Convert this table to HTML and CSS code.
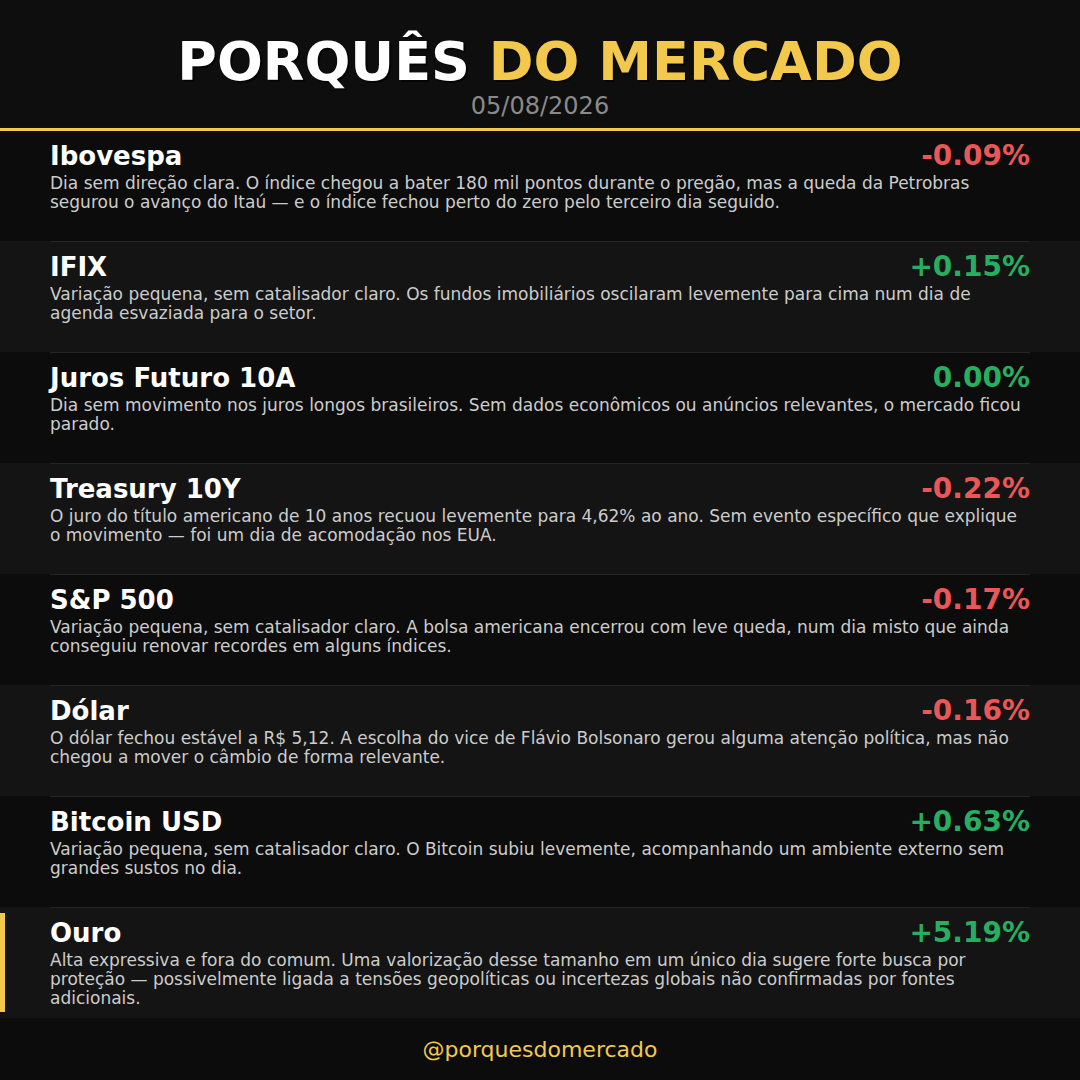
FILE: index.html
```html
<!DOCTYPE html>
<html lang="pt-BR">
<head>
<meta charset="utf-8">
<title>Porquês do Mercado</title>
<link rel="stylesheet" href="styles.css">
</head>
<body>
<div class="page">
  <header class="header">
    <h1 class="title">PORQUÊS <span class="accent">DO MERCADO</span></h1>
    <div class="date">05/08/2026</div>
  </header>
  <main class="list">
    <section class="row">
      <div class="inner first">
        <div class="head"><h2 class="name">Ibovespa</h2><span class="pct neg">-0.09%</span></div>
        <p class="desc">Dia sem direção clara. O índice chegou a bater 180 mil pontos durante o pregão, mas a queda da Petrobras segurou o avanço do Itaú — e o índice fechou perto do zero pelo terceiro dia seguido.</p>
      </div>
    </section>
    <section class="row alt">
      <div class="inner">
        <div class="head"><h2 class="name">IFIX</h2><span class="pct pos">+0.15%</span></div>
        <p class="desc">Variação pequena, sem catalisador claro. Os fundos imobiliários oscilaram levemente para cima num dia de agenda esvaziada para o setor.</p>
      </div>
    </section>
    <section class="row">
      <div class="inner">
        <div class="head"><h2 class="name">Juros Futuro 10A</h2><span class="pct pos">0.00%</span></div>
        <p class="desc">Dia sem movimento nos juros longos brasileiros. Sem dados econômicos ou anúncios relevantes, o mercado ficou parado.</p>
      </div>
    </section>
    <section class="row alt">
      <div class="inner">
        <div class="head"><h2 class="name">Treasury 10Y</h2><span class="pct neg">-0.22%</span></div>
        <p class="desc">O juro do título americano de 10 anos recuou levemente para 4,62% ao ano. Sem evento específico que explique o movimento — foi um dia de acomodação nos EUA.</p>
      </div>
    </section>
    <section class="row">
      <div class="inner">
        <div class="head"><h2 class="name">S&amp;P 500</h2><span class="pct neg">-0.17%</span></div>
        <p class="desc">Variação pequena, sem catalisador claro. A bolsa americana encerrou com leve queda, num dia misto que ainda conseguiu renovar recordes em alguns índices.</p>
      </div>
    </section>
    <section class="row alt">
      <div class="inner">
        <div class="head"><h2 class="name">Dólar</h2><span class="pct neg">-0.16%</span></div>
        <p class="desc">O dólar fechou estável a R$ 5,12. A escolha do vice de Flávio Bolsonaro gerou alguma atenção política, mas não chegou a mover o câmbio de forma relevante.</p>
      </div>
    </section>
    <section class="row">
      <div class="inner">
        <div class="head"><h2 class="name">Bitcoin USD</h2><span class="pct pos">+0.63%</span></div>
        <p class="desc">Variação pequena, sem catalisador claro. O Bitcoin subiu levemente, acompanhando um ambiente externo sem grandes sustos no dia.</p>
      </div>
    </section>
    <section class="row alt highlight">
      <div class="inner">
        <div class="head"><h2 class="name">Ouro</h2><span class="pct pos">+5.19%</span></div>
        <p class="desc">Alta expressiva e fora do comum. Uma valorização desse tamanho em um único dia sugere forte busca por proteção — possivelmente ligada a tensões geopolíticas ou incertezas globais não confirmadas por fontes adicionais.</p>
      </div>
    </section>
  </main>
  <footer class="footer">@porquesdomercado</footer>
</div>
</body>
</html>
```

FILE: styles.css
```css
* { box-sizing: border-box; }
html, body { margin: 0; padding: 0; }
body {
  background: #0c0c0c;
  font-family: "DejaVu Sans", Verdana, sans-serif;
  width: 1080px;
  height: 1080px;
  overflow: hidden;
}
.page {
  width: 1080px;
  height: 1080px;
  display: flex;
  flex-direction: column;
}
.header {
  height: 131px;
  background: #0e0e0e;
  border-bottom: 3px solid #f2c94c;
  display: flex;
  flex-direction: column;
  align-items: center;
  padding-top: 35px;
}
.title {
  margin: 0;
  font-size: 54px;
  line-height: 54px;
  font-weight: bold;
  color: #ffffff;
  text-shadow: 2px 2px 0 rgba(0, 0, 0, 0.6);
}
.accent { color: #f2c94c; }
.date {
  margin-top: 5px;
  font-size: 24px;
  line-height: 24px;
  color: #8a8a8a;
}
.list {
  display: flex;
  flex-direction: column;
}
.row {
  height: 111px;
  background: #0c0c0c;
  padding: 0 50px;
  position: relative;
}
.row.alt { background: #141414; }
.inner {
  height: 100%;
  border-top: 1px solid #252525;
  padding-top: 9px;
}
.row:first-child { height: 110px; }
.inner.first { border-top: none; }
.highlight::before {
  content: "";
  position: absolute;
  left: 0;
  top: 6px;
  bottom: 6px;
  width: 5px;
  background: #f2c94c;
}
.head {
  display: flex;
  justify-content: space-between;
  align-items: baseline;
}
.name {
  margin: 0;
  font-size: 26px;
  line-height: 32px;
  font-weight: bold;
  color: #ffffff;
}
.pct {
  font-size: 28px;
  line-height: 32px;
  font-weight: bold;
}
.neg { color: #eb5757; }
.pos { color: #27ae60; }
.desc {
  margin: 2px 0 0;
  font-size: 17px;
  line-height: 19px;
  color: #cccccc;
}
.footer {
  flex: 1;
  display: flex;
  align-items: center;
  justify-content: center;
  font-size: 22px;
  color: #f2c94c;
  background: #0c0c0c;
}
```
